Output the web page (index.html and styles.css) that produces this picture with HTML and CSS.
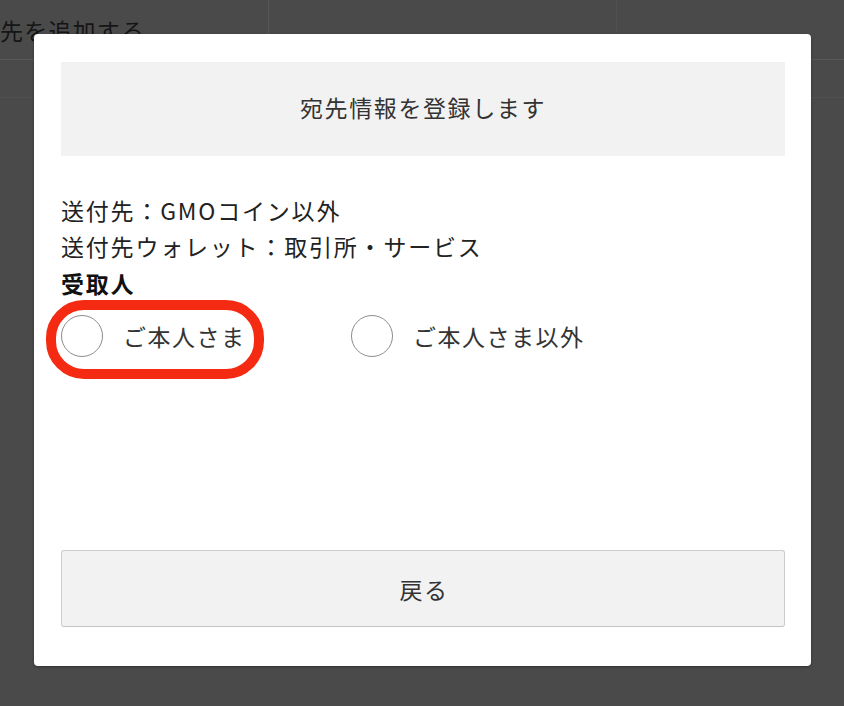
FILE: index.html
```html
<!DOCTYPE html>
<html lang="ja">
<head>
<meta charset="utf-8">
<title>宛先情報を登録します</title>
<link rel="stylesheet" href="styles.css">
</head>
<body>
<div class="backdrop">
  <div class="bg-row">
    <div class="bg-cell"><span class="bg-text">先を追加する</span></div>
    <div class="bg-cell bg-wide"></div>
    <div class="bg-cell bg-rest"></div>
  </div>
  <div class="bg-row bg-row2">
    <div class="bg-cell"></div>
  </div>
</div>

<div class="modal">
  <div class="modal-head">宛先情報を登録します</div>
  <div class="modal-body">
    <p class="info">送付先：GMOコイン以外</p>
    <p class="info">送付先ウォレット：取引所・サービス</p>
    <p class="info label">受取人</p>
    <div class="radios">
      <label class="radio"><span class="circle"></span><span class="radio-text">ご本人さま</span></label>
      <label class="radio"><span class="circle"></span><span class="radio-text">ご本人さま以外</span></label>
      <span class="highlight"></span>
    </div>
  </div>
  <button class="back">戻る</button>
</div>
</body>
</html>
```
FILE: styles.css
```css
html, body {
  margin: 0;
  padding: 0;
}
body {
  width: 844px;
  height: 706px;
  background: #4a4a4a;
  overflow: hidden;
  position: relative;
  font-family: "Noto Sans CJK JP", "Noto Sans", sans-serif;
  color: #333;
}

.backdrop {
  display: flex;
  flex-direction: column;
}
.bg-row {
  display: flex;
  height: 59px;
  border-bottom: 1px solid #575757;
}
.bg-row2 {
  height: 37px;
  border-bottom: 1px solid #505050;
}
.bg-cell {
  width: 268px;
  border-right: 1px solid #565656;
  display: flex;
  align-items: center;
  overflow: hidden;
  padding-top: 1px;
}
.bg-row2 .bg-cell {
  border-right: none;
}
.bg-wide {
  width: 347px;
  border-right: 1px solid #4f4f4f;
}
.bg-rest {
  flex: 1;
  border-right: none;
}
.bg-text {
  font-size: 23px;
  letter-spacing: 1.2px;
  color: #151515;
  white-space: nowrap;
}

.modal {
  position: absolute;
  left: 34px;
  top: 34px;
  width: 777px;
  height: 632px;
  box-sizing: border-box;
  background: #fff;
  border-radius: 4px;
  box-shadow: 0 1px 3px rgba(0,0,0,0.35);
  padding: 28px 26px 39px 27px;
  display: flex;
  flex-direction: column;
}

.modal-head {
  height: 94px;
  background: #f2f2f2;
  display: flex;
  align-items: center;
  justify-content: center;
  font-size: 23px;
  letter-spacing: 1.6px;
  color: #333;
  padding-bottom: 5px;
  box-sizing: border-box;
}

.modal-body {
  padding-top: 36px;
  flex: 1;
}
.info {
  margin: 0;
  font-size: 23px;
  line-height: 36px;
  letter-spacing: 1.8px;
  color: #222;
}
.label {
  font-weight: 700;
  color: #111;
  line-height: 38px;
}

.radios {
  position: relative;
  display: flex;
  margin-top: 13px;
}
.radio {
  width: 290px;
  display: flex;
  align-items: center;
  gap: 20px;
  height: 42px;
}
.circle {
  width: 42px;
  height: 42px;
  box-sizing: border-box;
  border-radius: 50%;
  border: 1.5px solid #8d8d8d;
  background: #fff;
  flex: none;
}
.radio-text {
  font-size: 23px;
  letter-spacing: 1.5px;
  color: #333;
}
.highlight {
  position: absolute;
  left: -15px;
  top: -15px;
  width: 218px;
  height: 79px;
  box-sizing: border-box;
  border: 10px solid #f42a12;
  border-radius: 38px;
}

.back {
  height: 77px;
  width: 100%;
  background: #f2f2f2;
  border: 1px solid #cccccc;
  border-bottom-color: #c4c4c4;
  border-radius: 3px;
  font-family: "Noto Sans CJK JP", "Noto Sans", sans-serif;
  font-size: 23px;
  letter-spacing: 1.5px;
  color: #333;
  padding: 0 0 0 2px;
}
```
